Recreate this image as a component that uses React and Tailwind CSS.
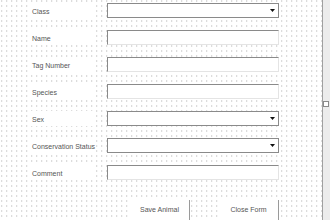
import React from 'react';

const rows = [
    { label: 'Class', kind: 'combo' },
    { label: 'Name', kind: 'text' },
    { label: 'Tag Number', kind: 'text' },
    { label: 'Species', kind: 'text' },
    { label: 'Sex', kind: 'combo' },
    { label: 'Conservation Status', kind: 'combo' },
    { label: 'Comment', kind: 'text' },
];

const Field = ({ kind }) => {
    if (kind === 'combo') {
        return (
            <div className="ml-[14px] w-[172px] h-[15px] bg-white border border-[#8a8a8a] flex items-center justify-end pr-[3px]">
                <svg width="5" height="3" viewBox="0 0 5 3">
                    <path d="M0 0 L5 0 L2.5 3 Z" fill="#111" />
                </svg>
            </div>
        );
    }
    return (
        <div className="ml-[14px] w-[172px] h-[15px] bg-white border-t border-l border-[#8a8a8a] border-r border-r-[#e4e4e4] border-b border-b-[#e4e4e4]" />
    );
};

const Button = ({ children, className }) => (
    <div className={`h-[20px] bg-white border-r border-[#9a9a9a] flex items-center justify-center text-[7px] text-[#555] ${className}`}>
        {children}
    </div>
);

export default function App() {
    return (
        <div className="w-[330px] h-[220px] flex overflow-hidden bg-white" style={{ fontFamily: '"Liberation Sans", Arial, sans-serif' }}>
            {/* design canvas */}
            <div className="w-[323px] h-full border-r border-[#a0a0a0] bg-white bg-[radial-gradient(circle,#a8a8a8_0.6px,transparent_0.9px)] bg-[length:5px_5px] bg-[position:-0.8px_-1.5px] pt-[3px] flex flex-col">
                {rows.map((r) => (
                    <div key={r.label} className="h-[27px] flex items-start">
                        <div className="ml-[28px] w-[65px] h-[15px] bg-white pl-[4px] flex items-center text-[7px] text-[#555] whitespace-nowrap pt-[4px]">
                            {r.label}
                        </div>
                        <Field kind={r.kind} />
                    </div>
                ))}
                <div className="flex mt-[8px]">
                    <Button className="ml-[130px] w-[60px]">Save Animal</Button>
                    <Button className="ml-[29px] w-[60px]">Close Form</Button>
                </div>
            </div>
            {/* side bar */}
            <div className="flex-1 bg-[#ececec] flex flex-col">
                <div className="mt-[101px] w-[6px] h-[6px] bg-white border border-[#8a8a8a]" />
            </div>
        </div>
    );
}
